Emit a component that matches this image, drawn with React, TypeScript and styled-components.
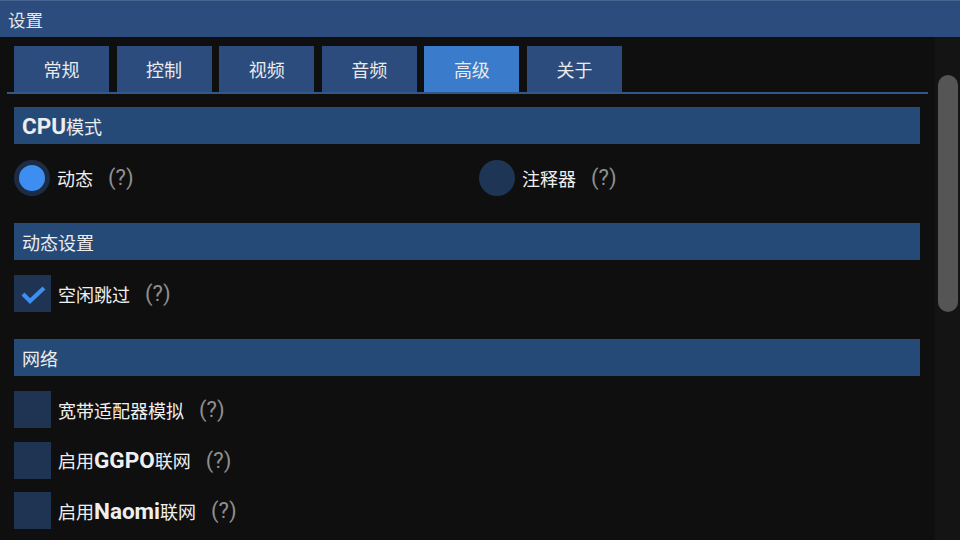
import styled, { createGlobalStyle } from 'styled-components';

const GlobalStyle = createGlobalStyle`
  html, body {
    margin: 0;
    padding: 0;
    background: #0f0f0f;
  }
  body {
    font-family: Roboto, "Noto Sans CJK SC", sans-serif;
    color: #ececec;
  }
  * {
    box-sizing: border-box;
  }
`;

const tabs = ['常规', '控制', '视频', '音频', '高级', '关于'];

const Window = styled.div`
  width: 960px;
  height: 540px;
  display: flex;
  flex-direction: column;
  overflow: hidden;
  background: #0f0f0f;
`;

const TitleBar = styled.div`
  height: 37px;
  flex: none;
  display: flex;
  align-items: center;
  padding-left: 8px;
  font-size: 17.5px;
  color: #e6e6e6;
  background: #2c4c7e;
  border-top: 1px solid #46648f;
`;

const Body = styled.div`
  flex: 1;
  display: flex;
  gap: 7px;
  min-height: 0;
`;

const Content = styled.div`
  width: 928px;
  padding-left: 7px;
  display: flex;
  flex-direction: column;
`;

const TabBar = styled.div`
  margin-top: 9px;
  padding-left: 7px;
  display: flex;
  gap: 7.6px;
  border-bottom: 2px solid #34578a;
`;

const Tab = styled.div<{ $active?: boolean }>`
  width: 95px;
  height: 46px;
  display: flex;
  align-items: center;
  justify-content: center;
  font-size: 18px;
  color: #eaeaea;
  background: ${(p) => (p.$active ? '#3a7bcb' : '#2b4c7d')};
`;

const Sections = styled.div`
  padding: 13px 8px 0 7px;
  display: flex;
  flex-direction: column;
  gap: 27px;
`;

const Section = styled.div`
  display: flex;
  flex-direction: column;
`;

const Header = styled.div`
  height: 37px;
  display: flex;
  align-items: center;
  padding-left: 8px;
  font-size: 18px;
  color: #ededed;
  background: #264a78;
`;

const Strong = styled.b`
  font-family: Roboto, sans-serif;
  font-weight: 700;
  font-size: 22.5px;
`;

const Rows = styled.div`
  padding-top: 15px;
  display: flex;
  flex-direction: column;
  gap: 13.5px;
`;

const RadioRow = styled.div`
  display: grid;
  grid-template-columns: 465px 1fr;
`;

const Option = styled.div`
  height: 37px;
  display: flex;
  align-items: center;
  font-size: 18px;
  color: #efefef;
`;

const Radio = styled.div<{ $on?: boolean }>`
  width: 36px;
  height: 36px;
  margin-right: 7px;
  border-radius: 50%;
  background: ${(p) => (p.$on ? '#3d8ef0' : '#1f3556')};
  border: ${(p) => (p.$on ? '5px solid #1c2c45' : 'none')};
`;

const Box = styled.div`
  width: 37px;
  height: 37px;
  margin-right: 7px;
  background: #1f3352;
  display: flex;
  align-items: center;
  justify-content: center;
`;

const Help = styled.span`
  margin-left: 15px;
  font-family: Roboto, sans-serif;
  font-size: 22px;
  color: #8f8f8f;
`;

const Track = styled.div`
  width: 25px;
  background: #141414;
  padding-top: 38px;
  display: flex;
  justify-content: center;
`;

const Thumb = styled.div`
  width: 20px;
  height: 237px;
  border-radius: 10px;
  background: #555555;
`;

const Check = () => (
  <svg width="30" height="30" viewBox="0 0 30 30">
    <path d="M5 15 L12 22 L26 9" fill="none" stroke="#3d8ef0" strokeWidth="4.2" />
  </svg>
);

const CheckItem = ({ checked, children }: { checked?: boolean; children: React.ReactNode }) => (
  <Option>
    <Box>{checked && <Check />}</Box>
    {children}
    <Help>(?)</Help>
  </Option>
);

export default function App() {
  return (
    <>
      <GlobalStyle />
      <Window>
        <TitleBar>设置</TitleBar>
        <Body>
          <Content>
            <TabBar>
              {tabs.map((t) => (
                <Tab key={t} $active={t === '高级'}>
                  {t}
                </Tab>
              ))}
            </TabBar>
            <Sections>
              <Section>
                <Header>
                  <Strong>CPU</Strong>模式
                </Header>
                <Rows>
                  <RadioRow>
                    <Option>
                      <Radio $on />
                      动态
                      <Help>(?)</Help>
                    </Option>
                    <Option>
                      <Radio />
                      注释器
                      <Help>(?)</Help>
                    </Option>
                  </RadioRow>
                </Rows>
              </Section>
              <Section>
                <Header>动态设置</Header>
                <Rows>
                  <CheckItem checked>空闲跳过</CheckItem>
                </Rows>
              </Section>
              <Section>
                <Header>网络</Header>
                <Rows>
                  <CheckItem>宽带适配器模拟</CheckItem>
                  <CheckItem>
                    启用<Strong>GGPO</Strong>联网
                  </CheckItem>
                  <CheckItem>
                    启用<Strong>Naomi</Strong>联网
                  </CheckItem>
                </Rows>
              </Section>
            </Sections>
          </Content>
          <Track>
            <Thumb />
          </Track>
        </Body>
      </Window>
    </>
  );
}
